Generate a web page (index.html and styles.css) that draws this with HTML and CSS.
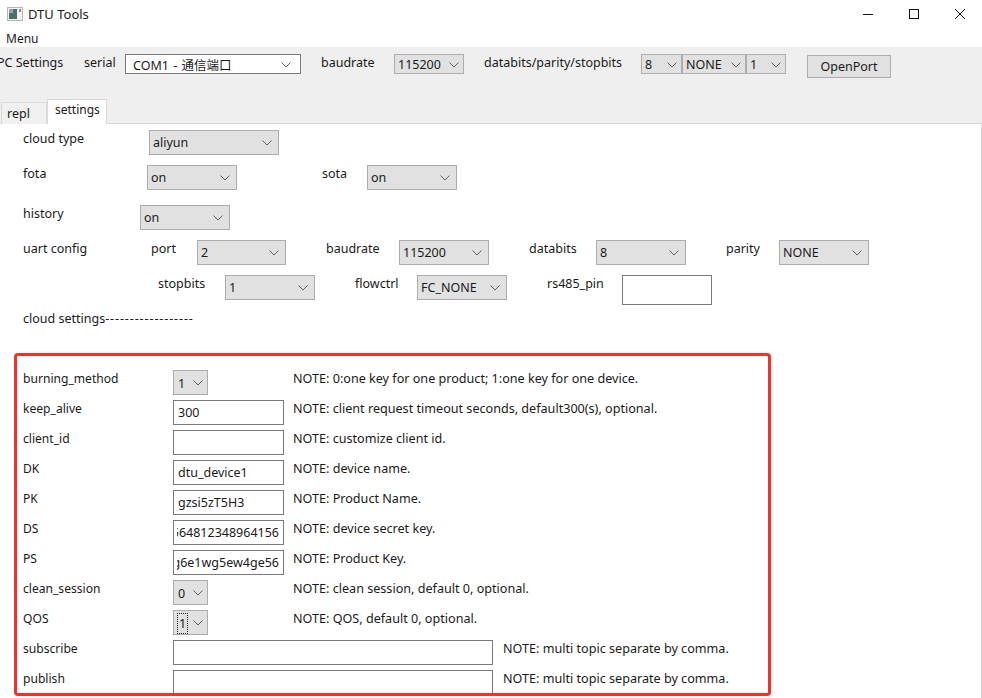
FILE: index.html
```html
<!DOCTYPE html>
<html lang="en">
<head>
  <meta charset="UTF-8">
  <title>DTU Tools</title>
  <link rel="stylesheet" href="styles.css">
</head>
<body>

  <div class="titlebar">
    <svg class="app-icon" width="16" height="14" viewBox="0 0 16 14">
      <rect x="0.5" y="0.5" width="15" height="13" fill="#f2f2f2" stroke="#b5b5b5"/>
      <rect x="2" y="2" width="8" height="10" fill="#4f6f6c"/>
      <rect x="2" y="2" width="4" height="4" fill="#8fa8a5"/>
      <rect x="12" y="2" width="2" height="3" fill="#8a8a8a"/>
    </svg>
    <span class="app-title">DTU Tools</span>
    <div class="win-buttons">
      <svg width="12" height="12" viewBox="0 0 12 12"><path d="M1 6.5H11" stroke="#111" fill="none"/></svg>
      <svg width="12" height="12" viewBox="0 0 12 12"><rect x="1.5" y="1.5" width="9" height="9" stroke="#111" fill="none"/></svg>
      <svg width="12" height="12" viewBox="0 0 12 12"><path d="M1 1L11 11M11 1L1 11" stroke="#111" fill="none"/></svg>
    </div>
  </div>

  <div class="menubar">Menu</div>

  <div class="toolbar">
    <div class="row row-port">
      <span class="label">PC Settings</span>
      <span class="label">serial</span>
      <div class="combo combo-white"><span>COM1 - 通信端口</span><svg class="chev" width="10" height="6" viewBox="0 0 10 6"><path d="M0.5 0.5L5 5L9.5 0.5"/></svg></div>
      <span></span>
      <span class="label">baudrate</span>
      <div class="combo"><span>115200</span><svg class="chev" width="10" height="6" viewBox="0 0 10 6"><path d="M0.5 0.5L5 5L9.5 0.5"/></svg></div>
      <span></span>
      <span class="label">databits/parity/stopbits</span>
      <div class="combo"><span>8</span><svg class="chev" width="10" height="6" viewBox="0 0 10 6"><path d="M0.5 0.5L5 5L9.5 0.5"/></svg></div>
      <div class="combo"><span>NONE</span><svg class="chev" width="10" height="6" viewBox="0 0 10 6"><path d="M0.5 0.5L5 5L9.5 0.5"/></svg></div>
      <div class="combo"><span>1</span><svg class="chev" width="10" height="6" viewBox="0 0 10 6"><path d="M0.5 0.5L5 5L9.5 0.5"/></svg></div>
      <span></span>
      <button class="btn" type="button">OpenPort</button>
    </div>
    <div class="tabs">
      <div class="tab">repl</div>
      <div class="tab tab-active">settings</div>
    </div>
  </div>

  <div class="pane">
    <div class="row row-cloud">
      <span class="label">cloud type</span>
      <div class="combo combo-big"><span>aliyun</span><svg class="chev" width="10" height="6" viewBox="0 0 10 6"><path d="M0.5 0.5L5 5L9.5 0.5"/></svg></div>
    </div>
    <div class="row row-fota">
      <span class="label">fota</span>
      <div class="combo combo-big"><span>on</span><svg class="chev" width="10" height="6" viewBox="0 0 10 6"><path d="M0.5 0.5L5 5L9.5 0.5"/></svg></div>
      <span></span>
      <span class="label">sota</span>
      <div class="combo combo-big"><span>on</span><svg class="chev" width="10" height="6" viewBox="0 0 10 6"><path d="M0.5 0.5L5 5L9.5 0.5"/></svg></div>
    </div>
    <div class="row row-history">
      <span class="label">history</span>
      <div class="combo combo-big"><span>on</span><svg class="chev" width="10" height="6" viewBox="0 0 10 6"><path d="M0.5 0.5L5 5L9.5 0.5"/></svg></div>
    </div>
    <div class="row row-uart1">
      <span class="label">uart config</span>
      <span class="label">port</span>
      <div class="combo combo-big"><span>2</span><svg class="chev" width="10" height="6" viewBox="0 0 10 6"><path d="M0.5 0.5L5 5L9.5 0.5"/></svg></div>
      <span></span>
      <span class="label">baudrate</span>
      <div class="combo combo-big"><span>115200</span><svg class="chev" width="10" height="6" viewBox="0 0 10 6"><path d="M0.5 0.5L5 5L9.5 0.5"/></svg></div>
      <span></span>
      <span class="label">databits</span>
      <div class="combo combo-big"><span>8</span><svg class="chev" width="10" height="6" viewBox="0 0 10 6"><path d="M0.5 0.5L5 5L9.5 0.5"/></svg></div>
      <span></span>
      <span class="label">parity</span>
      <div class="combo combo-big"><span>NONE</span><svg class="chev" width="10" height="6" viewBox="0 0 10 6"><path d="M0.5 0.5L5 5L9.5 0.5"/></svg></div>
    </div>
    <div class="row row-uart2">
      <span></span>
      <span class="label">stopbits</span>
      <div class="combo combo-big"><span>1</span><svg class="chev" width="10" height="6" viewBox="0 0 10 6"><path d="M0.5 0.5L5 5L9.5 0.5"/></svg></div>
      <span></span>
      <span class="label">flowctrl</span>
      <div class="combo combo-big"><span>FC_NONE</span><svg class="chev" width="10" height="6" viewBox="0 0 10 6"><path d="M0.5 0.5L5 5L9.5 0.5"/></svg></div>
      <span></span>
      <span class="label">rs485_pin</span>
      <div class="field field-tall"></div>
    </div>
    <div class="section-label label">cloud settings<span class="dashes">------------------</span></div>

    <div class="cloud-box">
      <div class="cloud-row">
        <span class="label">burning_method</span>
        <div class="cell"><div class="combo combo-big combo-small"><span>1</span><svg class="chev" width="10" height="6" viewBox="0 0 10 6"><path d="M0.5 0.5L5 5L9.5 0.5"/></svg></div></div>
        <span class="label note">NOTE: 0:one key for one product; 1:one key for one device.</span>
      </div>
      <div class="cloud-row">
        <span class="label">keep_alive</span>
        <div class="cell"><div class="field">300</div></div>
        <span class="label note">NOTE: client request timeout seconds, default300(s), optional.</span>
      </div>
      <div class="cloud-row">
        <span class="label">client_id</span>
        <div class="cell"><div class="field"></div></div>
        <span class="label note">NOTE: customize client id.</span>
      </div>
      <div class="cloud-row">
        <span class="label">DK</span>
        <div class="cell"><div class="field">dtu_device1</div></div>
        <span class="label note">NOTE: device name.</span>
      </div>
      <div class="cloud-row">
        <span class="label">PK</span>
        <div class="cell"><div class="field">gzsi5zT5H3</div></div>
        <span class="label note">NOTE: Product Name.</span>
      </div>
      <div class="cloud-row">
        <span class="label">DS</span>
        <div class="cell"><div class="field"><div class="field-scrolled"><span>564812348964156</span></div></div></div>
        <span class="label note">NOTE: device secret key.</span>
      </div>
      <div class="cloud-row">
        <span class="label">PS</span>
        <div class="cell"><div class="field"><div class="field-scrolled"><span>g6e1wg5ew4ge56</span></div></div></div>
        <span class="label note">NOTE: Product Key.</span>
      </div>
      <div class="cloud-row">
        <span class="label">clean_session</span>
        <div class="cell"><div class="combo combo-big combo-small"><span>0</span><svg class="chev" width="10" height="6" viewBox="0 0 10 6"><path d="M0.5 0.5L5 5L9.5 0.5"/></svg></div></div>
        <span class="label note">NOTE: clean session, default 0, optional.</span>
      </div>
      <div class="cloud-row">
        <span class="label">QOS</span>
        <div class="cell"><div class="combo combo-big combo-small combo-focus"><span>1</span><svg class="chev" width="10" height="6" viewBox="0 0 10 6"><path d="M0.5 0.5L5 5L9.5 0.5"/></svg></div></div>
        <span class="label note">NOTE: QOS, default 0, optional.</span>
      </div>
      <div class="cloud-row">
        <span class="label">subscribe</span>
        <div class="cell cell-wide"><div class="field"></div></div>
        <span class="label note">NOTE: multi topic separate by comma.</span>
      </div>
      <div class="cloud-row">
        <span class="label">publish</span>
        <div class="cell cell-wide"><div class="field"></div></div>
        <span class="label note">NOTE: multi topic separate by comma.</span>
      </div>
    </div>
  </div>

</body>
</html>
```

FILE: styles.css
```css
* {
  box-sizing: border-box;
}

html, body {
  height: 100%;
}

body {
  margin: 0;
  overflow: hidden;
  background: #fff;
  color: #1a1a1a;
  font-family: 'Noto Sans', 'Noto Sans CJK SC', sans-serif;
  font-size: 12px;
}

.titlebar {
  height: 28px;
  display: flex;
  align-items: center;
  padding-left: 7px;
}

.app-icon {
  margin-right: 5px;
}

.app-title {
  flex: 1;
  font-size: 13px;
}

.win-buttons {
  display: flex;
  gap: 34px;
  padding-right: 16px;
  margin-top: -1px;
}

.menubar {
  height: 19px;
  line-height: 21px;
  padding-left: 6px;
}

.toolbar {
  height: 76px;
  background: #efefef;
  position: relative;
  padding-top: 7px;
}

.row {
  display: grid;
  align-items: start;
}

.label {
  font-size: 12.5px;
  line-height: 18px;
  white-space: nowrap;
}

.row-port {
  margin-left: -3px;
  grid-template-columns: 87px 41px 176px 20px 73px 70px 20px 157px 41px 64px 40px 21px 84px;
}

.combo {
  height: 20px;
  display: flex;
  align-items: center;
  justify-content: space-between;
  padding: 1px 4px 0 3px;
  background: #e1e1e1;
  border: 1px solid #adadad;
  font-size: 12.5px;
}

.combo-white {
  background: #fff;
  border-color: #7a7a7a;
  padding: 1px 9px 0 7px;
  word-spacing: 1px;
}

.combo-big {
  height: 25px;
  padding: 0 6px 0 3px;
}

.combo-small {
  width: 35px;
  padding: 1px 4px 0 4px;
}

.combo-focus span {
  outline: 1px dotted #222;
  line-height: 19px;
  padding: 0 1px;
}

.chev {
  flex: none;
  fill: none;
  stroke: #606060;
}

.btn {
  height: 23px;
  margin-top: 1px;
  padding: 0;
  background: #e1e1e1;
  border: 1px solid #adadad;
  font: inherit;
  font-size: 12.5px;
  color: inherit;
}

.tabs {
  position: absolute;
  left: 1px;
  bottom: -1px;
  display: flex;
  align-items: flex-end;
}

.tab {
  width: 46px;
  height: 22px;
  line-height: 22px;
  padding-left: 5px;
  font-size: 12.5px;
  background: #f0f0f0;
  border: 1px solid #d9d9d9;
  border-bottom: 0;
}

.tab-active {
  width: 60px;
  height: 25px;
  line-height: 20px;
  padding-left: 7px;
  font-size: 12px;
  background: #fff;
  position: relative;
}

.pane {
  height: 575px;
  padding-top: 6px;
  border-top: 1px solid #d9d9d9;
  border-right: 1px solid #d9d9d9;
}

.pane .row {
  padding-left: 23px;
}

.row-cloud {
  grid-template-columns: 126px 130px;
}

.row-fota {
  margin-top: 10px;
  grid-template-columns: 124px 90px 85px 45px 90px;
}

.row-history {
  margin-top: 15px;
  grid-template-columns: 117px 90px;
}

.row-uart1 {
  margin-top: 10px;
  grid-template-columns: 128px 46px 89px 40px 73px 90px 40px 67px 90px 40px 53px 90px;
}

.row-uart2 {
  margin-top: 10px;
  grid-template-columns: 135px 67px 90px 40px 62px 90px 40px 75px 90px;
}

.section-label {
  margin: 5px 0 0 23px;
}

.dashes {
  letter-spacing: 0.9px;
}

.cloud-box {
  margin: 25px 0 0 14px;
  width: 757px;
  height: 343px;
  padding: 14px 0 0 6px;
  border: 3px solid #f5302a;
  border-radius: 4px;
  overflow: hidden;
}

.cloud-row {
  display: flex;
  align-items: flex-start;
  height: 25px;
  margin-bottom: 5px;
}

.cloud-row > .label:first-child {
  width: 150px;
  font-size: 12.1px;
}

.note {
  font-size: 12.6px;
}

.cell {
  width: 120px;
}

.cell-wide {
  width: 330px;
}

.cell .field {
  width: 111px;
}

.cell-wide .field {
  width: 320px;
}

.field {
  height: 25px;
  line-height: 24px;
  padding: 0 4px;
  background: #fff;
  border: 1px solid #7a7a7a;
  font-size: 12.5px;
  overflow: hidden;
  white-space: nowrap;
}

.field-tall {
  height: 30px;
}

.field-scrolled {
  display: flex;
  justify-content: flex-end;
  overflow: hidden;
  margin-left: -1px;
}

.field-scrolled span {
  flex: none;
}
```
